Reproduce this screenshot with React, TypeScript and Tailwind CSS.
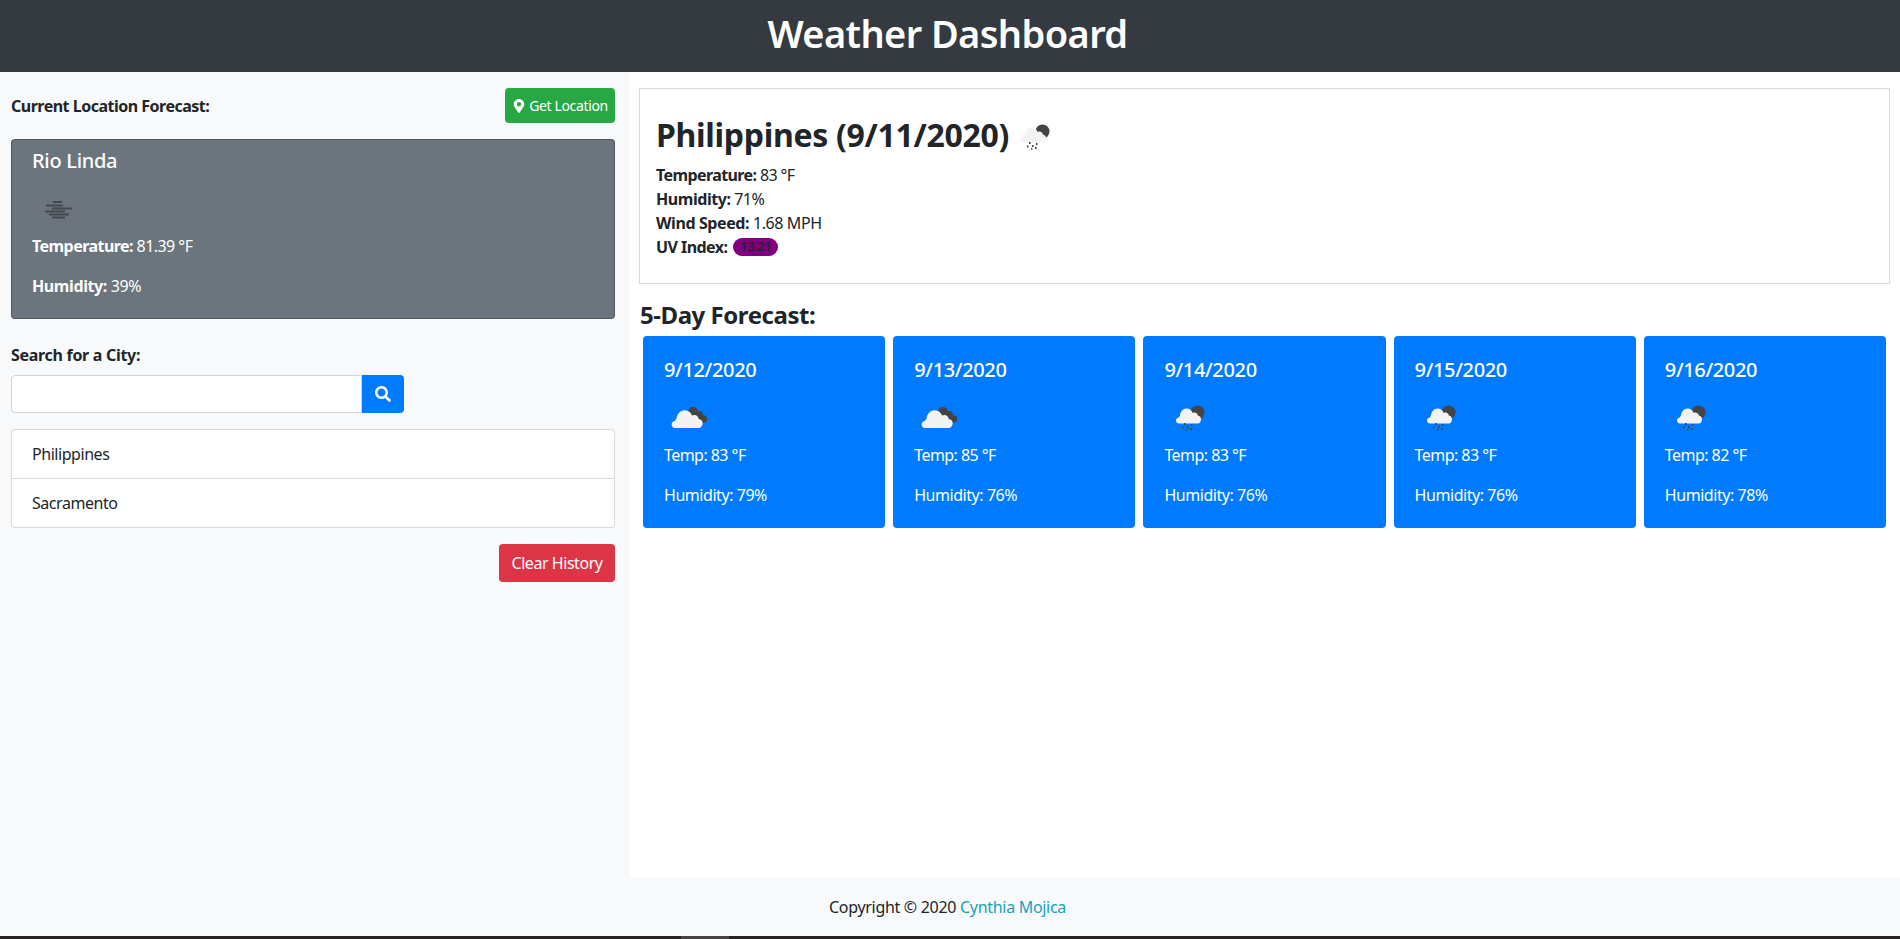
import { FaMapMarkerAlt, FaSearch } from "react-icons/fa";

const forecast = [
  { date: "9/12/2020", temp: 83, humidity: 79, icon: "clouds" },
  { date: "9/13/2020", temp: 85, humidity: 76, icon: "clouds" },
  { date: "9/14/2020", temp: 83, humidity: 76, icon: "rain" },
  { date: "9/15/2020", temp: 83, humidity: 76, icon: "rain" },
  { date: "9/16/2020", temp: 82, humidity: 78, icon: "rain" },
];

const CLOUD_PATH =
  "M11 35c-2 0-3.4-1.5-3.4-3.4 0-2 1.5-3.4 3.4-3.6.2-1 .7-1.6 1.5-2.2.2-4.4 3.4-8.6 8.2-8.6 3.8 0 6.2 2.2 7.4 5.4 1-.6 2.4-.8 3.6-.4 1.8.6 2.8 2 3 3.8 2.2.2 4 1.9 4 4 0 2-1.6 5-3.6 5z";

function BrokenCloudsIcon() {
  return (
    <svg viewBox="0 0 50 50" className="h-[50px] w-[50px] shrink-0">
      <g fill="#444444">
        <circle cx="29" cy="19" r="5" />
        <circle cx="35" cy="22" r="4" />
        <circle cx="39.5" cy="26" r="3.8" />
        <path d="M26 17l12 7 0 5-8-3z" />
      </g>
      <path d={CLOUD_PATH} fill="#f3f3f3" />
    </svg>
  );
}

function RainIcon({ cloud = "#f3f3f3" }: { cloud?: string }) {
  return (
    <svg viewBox="0 0 50 50" className="h-[50px] w-[50px] shrink-0">
      <circle cx="33.5" cy="19.5" r="7" fill="#444444" />
      <path
        d="M15 30.5c-1.8 0-3-1.4-3-3 0-1.8 1.2-3 3-3.1.1-.8.5-1.4 1-1.8.2-3.6 2.8-7 6.6-7 3 0 5 1.8 6 4.4.8-.5 2-.6 2.9-.3 1.5.5 2.3 1.6 2.5 3 1.8.2 3 1.6 3 3.3 0 2.4-1.2 4.5-3 4.5z"
        fill={cloud}
      />
      <g fill="#444444">
        <rect x="20" y="30" width="1.6" height="2" />
        <rect x="27" y="31" width="1.4" height="2" />
        <rect x="18" y="33.5" width="1.5" height="2" />
        <rect x="23" y="33" width="1.5" height="2" />
        <rect x="22" y="36" width="1.4" height="1.6" />
        <rect x="26" y="35" width="1.6" height="2" />
      </g>
    </svg>
  );
}

function FogIcon() {
  return (
    <svg viewBox="0 0 50 50" className="ml-[2px] h-[50px] w-[50px] shrink-0">
      <g fill="#45494f">
        <rect x="19" y="17" width="9" height="2" />
        <rect x="12" y="20.5" width="17" height="2" />
        <rect x="18" y="23.5" width="20" height="2" />
        <rect x="11" y="26.5" width="20" height="2" />
        <rect x="15" y="29.5" width="20" height="2" />
        <rect x="18" y="32.5" width="13" height="2" />
      </g>
    </svg>
  );
}

export default function App() {
  return (
    <div className="flex h-[939px] flex-col overflow-hidden bg-[#f8f9fa] font-['Noto_Sans',sans-serif] text-[16px] leading-6 text-[#212529]">
      {/* Header */}
      <header className="flex h-[72px] items-center justify-center bg-[#343a40] pr-[5px] pb-[7px]">
        <h1 className="text-[38px] leading-[48px] font-semibold tracking-[-0.6px] text-white">
          Weather Dashboard
        </h1>
      </header>

      <div className="flex flex-1">
        {/* Sidebar */}
        <aside className="w-[630px] pt-4 pr-[15px] pl-[11px]">
          <div className="flex h-[35px] items-center justify-between">
            <span className="font-bold tracking-[-0.5px]">Current Location Forecast:</span>
            <button className="flex h-[35px] w-[110px] items-center justify-center gap-[3px] rounded bg-[#28a745] text-[14px] tracking-[-0.35px] text-white">
              <FaMapMarkerAlt className="text-[14px]" />
              Get Location
            </button>
          </div>

          <div className="mt-4 h-[180px] rounded border border-black/25 bg-[#6c757d] px-5 pt-[9px] text-white">
            <h5 className="mb-[11px] text-[20px] font-medium tracking-[-0.3px]">Rio Linda</h5>
            <FogIcon />
            <p className="mb-4 tracking-[-0.55px]">
              <b>Temperature:</b> 81.39 °F
            </p>
            <p className="tracking-[-0.4px]">
              <b>Humidity:</b> 39%
            </p>
          </div>

          <label className="mt-6 block font-bold tracking-[-0.3px]">Search for a City:</label>
          <div className="mt-2 flex h-[38px] w-[393px]">
            <input className="min-w-0 flex-1 rounded-l border border-[#ced4da] bg-white" />
            <button className="flex w-[42px] items-center justify-center rounded-r bg-[#007bff] pr-px text-white">
              <FaSearch className="text-[16px]" />
            </button>
          </div>

          <ul className="mt-4 rounded border border-black/15 bg-white">
            <li className="flex h-[49px] items-center border-b border-black/15 px-5 tracking-[-0.45px]">Philippines</li>
            <li className="flex h-[48px] items-center px-5 tracking-[-0.45px]">Sacramento</li>
          </ul>

          <div className="mt-4 flex justify-end">
            <button className="h-[38px] w-[116px] rounded bg-[#dc3545] tracking-[-0.45px] text-white">Clear History</button>
          </div>
        </aside>

        {/* Main */}
        <main className="flex-1 bg-white pt-4 pr-[10px] pl-[9px]">
          <section className="h-[196px] border border-black/15 px-4 pt-5">
            <div className="-mt-[1px] flex h-[55px] items-center pt-[2px]">
              <h2 className="-mt-[3px] text-[32px] leading-[48px] font-bold tracking-[-0.3px]">Philippines (9/11/2020)</h2>
              <RainIcon />
            </div>
            <p className="tracking-[-0.6px]">
              <b>Temperature:</b> 83 °F
            </p>
            <p className="tracking-[-0.45px]">
              <b>Humidity:</b> 71%
            </p>
            <p className="tracking-[-0.4px]">
              <b>Wind Speed:</b> 1.68 MPH
            </p>
            <p className="flex items-center gap-[6px] tracking-[-0.55px]">
              <b>UV Index:</b>
              <span className="flex h-[18px] w-[45px] items-center justify-center rounded-full bg-[#800080] text-[12px] font-semibold tracking-normal">
                13.21
              </span>
            </p>
          </section>

          <h3 className="mt-[16px] ml-px text-[24px] leading-[29px] font-bold tracking-[-0.45px]">5-Day Forecast:</h3>

          <div className="mt-[7px] mr-[4px] ml-1 grid grid-cols-5 gap-2">
            {forecast.map((day) => (
              <div key={day.date} className="h-[192px] rounded bg-[#007bff] px-[21px] pt-[22px] text-white">
                <h5 className="mb-[11px] text-[20px] font-medium tracking-[-0.35px]">{day.date}</h5>
                {day.icon === "clouds" ? <BrokenCloudsIcon /> : <RainIcon />}
                <p className="mb-4 tracking-[-0.55px]">Temp: {day.temp} °F</p>
                <p className="tracking-[-0.45px]">Humidity: {day.humidity}%</p>
              </div>
            ))}
          </div>
        </main>
      </div>

      {/* Footer */}
      <footer className="flex h-[59px] items-center justify-center pr-[5px] tracking-[-0.3px]">
        <span>
          Copyright © 2020 <a className="text-[#17a2b8]">Cynthia Mojica</a>
        </span>
      </footer>
      <div className="flex h-[3px] bg-[#2a2222]">
        <span className="ml-[681px] w-[48px] bg-[#4a4242]" />
      </div>
    </div>
  );
}
